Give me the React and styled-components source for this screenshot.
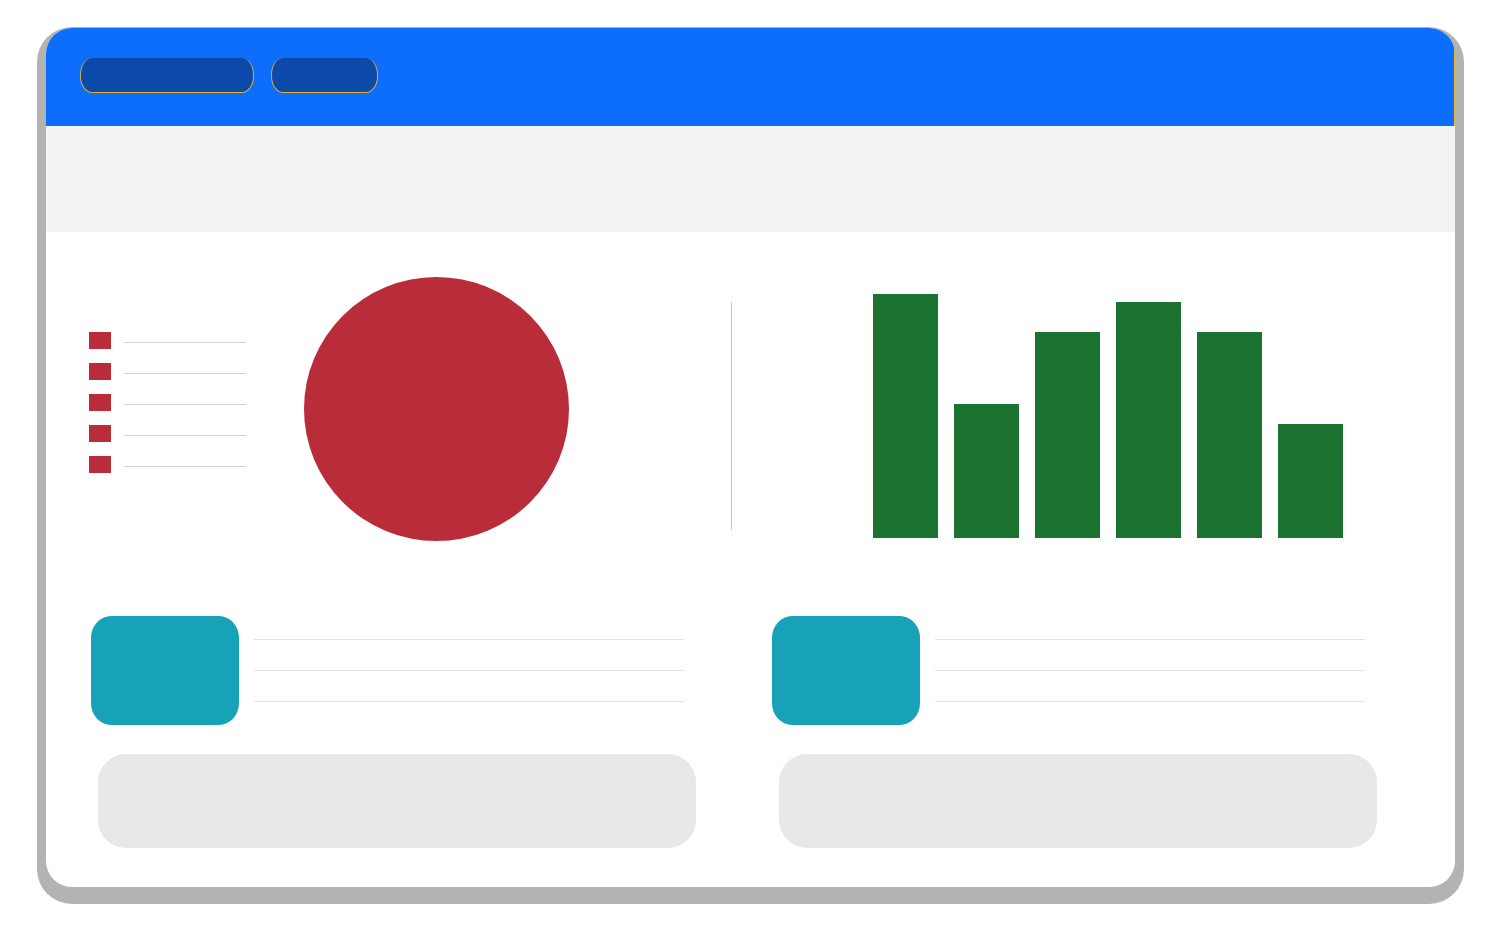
import React from "react";
import styled, { createGlobalStyle } from "styled-components";

const Global = createGlobalStyle`
  html, body { margin: 0; padding: 0; background: #ffffff; }
  body { font-family: "Liberation Sans", Arial, sans-serif; }
`;

const Page = styled.div`
  width: 1500px;
  height: 946px;
  padding: 28px 0 0 46px;
  box-sizing: border-box;
`;

const Card = styled.div`
  width: 1409px;
  height: 859px;
  background: #ffffff;
  border-radius: 26px;
  box-shadow: 0 8px 0 9px #b3b3b3;
  overflow: hidden;
  display: flex;
  flex-direction: column;
`;

const Header = styled.header`
  height: 98px;
  flex: none;
  background: #0d6efd;
  box-sizing: border-box;
  padding: 30px 0 0 34px;
  display: flex;
  align-items: flex-start;
  gap: 17px;
  box-shadow: inset -1px 0 0 #e8b830;
`;

const Pill = styled.div`
  width: ${(p) => p.$w}px;
  height: 35px;
  box-sizing: border-box;
  background: #0b4aa8;
  border: 1.5px solid #e2ae2c;
  border-top: none;
  border-radius: 12px / 17px;
`;

const SubBar = styled.div`
  height: 106px;
  flex: none;
  background: #f3f3f3;
`;

const ChartsRow = styled.section`
  margin-top: 45px;
  height: 264px;
  flex: none;
  display: flex;
  align-items: flex-start;
  padding-left: 43px;
`;

const Legend = styled.ul`
  list-style: none;
  margin: 55px 0 0 0;
  padding: 0;
  width: 157px;
  display: flex;
  flex-direction: column;
  gap: 14px;
`;

const LegendItem = styled.li`
  display: flex;
  align-items: center;
  gap: 13px;
  height: 17px;
`;

const Swatch = styled.span`
  width: 22px;
  height: 17px;
  background: #b92d3a;
  flex: none;
`;

const LegendLine = styled.span`
  flex: 1;
  height: 1px;
  margin-top: 3px;
  background: #d4d4d4;
`;

const Pie = styled.div`
  margin-left: 58px;
  width: 265px;
  height: 264px;
  flex: none;
  background: #b92d3a;
  border-radius: 50%;
`;

const Divider = styled.div`
  margin: 25px 0 0 162px;
  width: 1px;
  height: 228px;
  background: #c8c8c8;
  flex: none;
`;

const Bars = styled.div`
  margin: 17px 0 0 141px;
  height: 244px;
  display: flex;
  align-items: flex-end;
  gap: 16px;
`;

const Bar = styled.div`
  width: 65px;
  background: #1c7330;
`;

const BottomRow = styled.section`
  margin-top: 75px;
  padding-left: 45px;
  display: grid;
  grid-template-columns: 681px 681px;
`;

const Column = styled.div`
  display: flex;
  flex-direction: column;
  gap: 29px;
`;

const InfoRow = styled.div`
  display: flex;
  align-items: flex-start;
  gap: 15px;
`;

const Thumb = styled.div`
  width: 148px;
  height: 109px;
  background: #18a2b8;
  border-radius: 20px / 22px;
  flex: none;
`;

const Lines = styled.div`
  width: 430px;
  padding-top: 23px;
  display: flex;
  flex-direction: column;
  gap: 30px;
`;

const Line = styled.div`
  height: 1px;
  background: #e3e3e3;
`;

const Panel = styled.div`
  margin-left: 7px;
  width: 598px;
  height: 94px;
  background: #e8e8e8;
  border-radius: 28px;
`;

const barHeights = [244, 134, 206, 236, 206, 114];

function InfoColumn() {
  return (
    <Column>
      <InfoRow>
        <Thumb />
        <Lines>
          <Line />
          <Line />
          <Line />
        </Lines>
      </InfoRow>
      <Panel />
    </Column>
  );
}

export default function App() {
  return (
    <>
      <Global />
      <Page>
        <Card>
          <Header>
            <Pill $w={174} />
            <Pill $w={107} />
          </Header>
          <SubBar />
          <ChartsRow>
            <Legend>
              {[0, 1, 2, 3, 4].map((i) => (
                <LegendItem key={i}>
                  <Swatch />
                  <LegendLine />
                </LegendItem>
              ))}
            </Legend>
            <Pie />
            <Divider />
            <Bars>
              {barHeights.map((h, i) => (
                <Bar key={i} style={{ height: h }} />
              ))}
            </Bars>
          </ChartsRow>
          <BottomRow>
            <InfoColumn />
            <InfoColumn />
          </BottomRow>
        </Card>
      </Page>
    </>
  );
}
